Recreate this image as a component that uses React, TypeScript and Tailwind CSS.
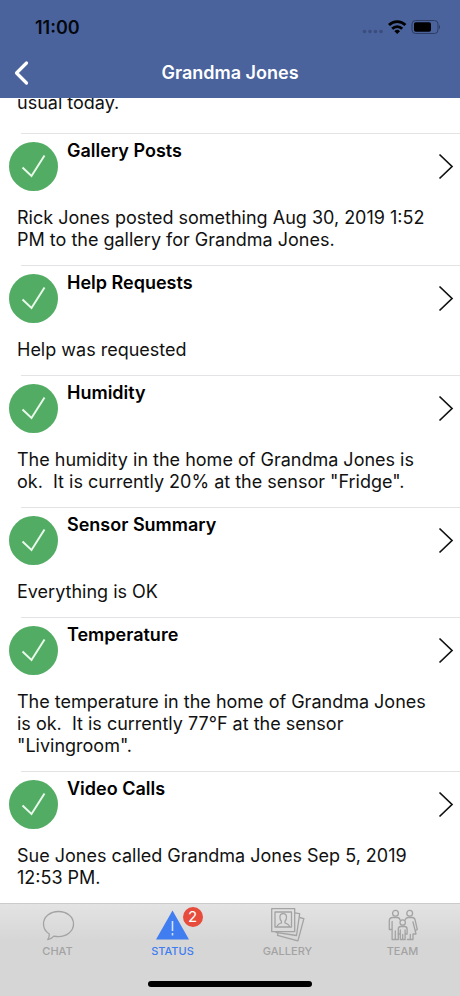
import type { ReactNode } from "react"

interface StatusItem {
  title: string
  text: string
}

const items: StatusItem[] = [
  { title: "Gallery Posts", text: "Rick Jones posted something Aug 30, 2019 1:52 PM to the gallery for Grandma Jones." },
  { title: "Help Requests", text: "Help was requested" },
  { title: "Humidity", text: "The humidity in the home of Grandma Jones is ok.  It is currently 20% at the sensor \"Fridge\"." },
  { title: "Sensor Summary", text: "Everything is OK" },
  { title: "Temperature", text: "The temperature in the home of Grandma Jones is ok.  It is currently 77°F at the sensor \"Livingroom\"." },
  { title: "Video Calls", text: "Sue Jones called Grandma Jones Sep 5, 2019 12:53 PM." },
]

const StatusBar = () => (
  <div className="flex h-12 items-end justify-between pr-5 pl-[35px]">
    <span className="pb-2 text-[18px] leading-6 font-semibold text-[#05080f]">11:00</span>
    <div className="flex items-center pb-[11px]">
      <svg className="h-5 w-[78px]" viewBox="0 0 78 20" fill="none">
        <g fill="#3a4d7c">
          <circle cx="2.500" cy="14.500" r="1.800" />
          <circle cx="8" cy="14.500" r="1.800" />
          <circle cx="13.500" cy="14.500" r="1.800" />
          <circle cx="19" cy="14.500" r="1.800" />
        </g>
        <g stroke="#000" strokeWidth="2.800">
          <path d="M27 8a11.500 11.500 0 0 1 16.400 0" />
          <path d="M30.200 11.700a7 7 0 0 1 10 0" />
        </g>
        <path d="M32.400 14.200a4 4 0 0 1 5.600 0l-2.800 2.800z" fill="#000" />
        <rect x="50" y="3.500" width="26" height="13" rx="3.500" stroke="#2c3c63" />
        <rect x="52" y="5.300" width="17" height="9.400" rx="1.800" fill="#000" />
        <path d="M77 8v4c1.300-.6 1.300-3.400 0-4z" fill="#2c3c63" />
      </svg>
    </div>
  </div>
)

const Header = () => (
  <header className="h-[98px] shrink-0 bg-[#4a639c]">
    <StatusBar />
    <div className="grid h-[50px] grid-cols-[48px_1fr_20px] items-center">
      <button type="button" aria-label="Back" className="flex h-full items-center pl-3">
        <svg className="h-7 w-5" viewBox="0 0 20 28" fill="none" stroke="#fff" strokeWidth="3.200" strokeLinecap="round" strokeLinejoin="round">
          <path d="M14.500 4L4.500 14l10 10" />
        </svg>
      </button>
      <h1 className="pr-7 text-center text-[18px] leading-6 font-semibold text-white">Grandma Jones</h1>
    </div>
  </header>
)

const StatusRow = ({ title, text }: StatusItem) => (
  <li>
    <div className="ml-[21px] h-px bg-[#e3e3e5]" />
    <button type="button" className="block w-full pb-[14px] text-left">
      <div className="flex h-[73px] items-start pt-2 pr-[6px] pl-[9px]">
        <svg className="h-[49px] w-[49px] shrink-0" viewBox="0 0 49 49" fill="none">
          <circle cx="24.500" cy="24.500" r="24.500" fill="#52ac64" />
          <path d="M13.500 25.500l9 8.500 13-20.500" stroke="#e8f8ea" strokeWidth="2" />
        </svg>
        <h2 className="-mt-[2px] flex-1 pl-[9px] text-[18px] leading-[22px] font-semibold text-black">{title}</h2>
        <svg className="h-[49px] w-4 shrink-0" viewBox="0 0 16 49" fill="none" stroke="#111" strokeWidth="1.700">
          <path d="M1.500 12.500l12.500 12-12.500 12" />
        </svg>
      </div>
      <p className="pr-5 pl-[17px] text-[18px] leading-[22px] whitespace-pre-wrap">{text}</p>
    </button>
  </li>
)

const Tab = ({ label, active = false, badge, children }: { label: string; active?: boolean; badge?: number; children: ReactNode }) => (
  <a href="#" className={active ? "flex flex-col items-center text-[#3f7df0]" : "flex flex-col items-center text-[#a3a3a3]"}>
    <span className="relative h-9 w-9">
      {children}
      {badge && (
        <span className="absolute top-0 -right-3 flex size-5 items-center justify-center rounded-full bg-[#e64b3c] text-[15px] leading-5 text-white">
          {badge}
        </span>
      )}
    </span>
    <span className="text-[11px] leading-4 font-medium">{label}</span>
  </a>
)

const TabBar = () => (
  <nav className="flex h-[93px] shrink-0 flex-col justify-between border-t border-[#cbcbcb] bg-linear-to-b from-[#e3e3e3] to-[#d6d6d6] to-40% pt-[3px] pb-[9px]">
    <div className="grid grid-cols-4">
      <Tab label="CHAT">
        <svg className="h-9 w-9" viewBox="0 0 36 36" fill="none" stroke="currentColor" strokeWidth="1.300" strokeLinejoin="round">
          <path d="M18.500 4.500c-8.300 0-15 5.300-15 12.500 0 4.300 2.300 7.800 5.800 10 .2 2-.5 3.900-1.600 5.500 2.700-.4 4.700-1.500 6.200-3.300 1.500.3 3 .5 4.600.5 8.300 0 15-5.500 15-12.700s-6.700-12.500-15-12.500z" />
        </svg>
      </Tab>
      <Tab label="STATUS" active badge={2}>
        <svg className="h-9 w-9" viewBox="0 0 36 36" fill="none">
          <path d="M17.500 3.500L34 32.500H1z" fill="#3f7df0" />
          <path d="M17.500 14v10M17.500 26v2.500" stroke="#d5e2fb" strokeWidth="1.600" />
        </svg>
      </Tab>
      <Tab label="GALLERY">
        <svg className="h-9 w-9" viewBox="0 0 36 36" fill="none" stroke="currentColor" strokeWidth="1.300" strokeLinejoin="round">
          <path d="M1.700 1.700h23v23h-23z" />
          <path d="M5 5h16.500v15H5z" />
          <path d="M7 20c.3-2.700 2-3.300 4.400-4v-1.800c-1.200-1.100-1.500-2.400-1.500-4.100 0-2.200 1.300-3.500 3.300-3.500s3.300 1.300 3.300 3.500c0 1.700-.3 3-1.500 4.100V16c2.400.7 4.200 1.300 4.500 4" />
          <path d="M24.700 5.800l5 .8-3.200 21.900-21-3.100" />
          <path d="M29.400 10.500l4.500 1.200-6 22.100-20.400-5.500.5-2.300" />
        </svg>
      </Tab>
      <Tab label="TEAM">
        <svg className="h-9 w-9" viewBox="0 0 36 36" fill="none" stroke="currentColor" strokeWidth="1.300" strokeLinejoin="round" strokeLinecap="round">
          <circle cx="10.500" cy="6.300" r="2.900" />
          <circle cx="24.700" cy="6.300" r="2.900" />
          <circle cx="17.700" cy="15.500" r="2.700" />
          <path d="M15 12.800c-.3-1.500-1.300-2.300-2.800-2.300H8c-2.200 0-3.700 1.300-3.700 3.500v8.500h2.800V14.500M7.100 22.500v10h6.200V27M10.300 24v8.500" />
          <path d="M20.200 12.800c.5-1.500 1.500-2.300 3-2.300h4c1.700 0 2.500.9 2.900 2.400l2.200 9.600-2 1.300M28 15l3 12h-3v5.500h-5.600M25.300 27.500v5" />
          <path d="M16 19.500h3.500c1.600 0 2.600 1 2.600 2.500v5h-2v5.500h-4.800V27h-2v-5c0-1.500 1.100-2.500 2.700-2.500zM17.700 27.500v5M15.300 23v4M20.100 23v4" />
        </svg>
      </Tab>
    </div>
    <div className="mx-auto h-[6px] w-[164px] rounded-full bg-black" />
  </nav>
)

const App = () => {
  return (
    <div className="flex h-screen flex-col bg-white font-['Inter',sans-serif] text-[#111]">
      <Header />
      <main className="flex flex-1 flex-col justify-end overflow-hidden">
        <p className="px-[17px] pb-[19px] text-[18px] leading-[22px]">usual today.</p>
        <ul>
          {items.map((item) => (
            <StatusRow key={item.title} {...item} />
          ))}
        </ul>
      </main>
      <TabBar />
    </div>
  )
}

export default App
